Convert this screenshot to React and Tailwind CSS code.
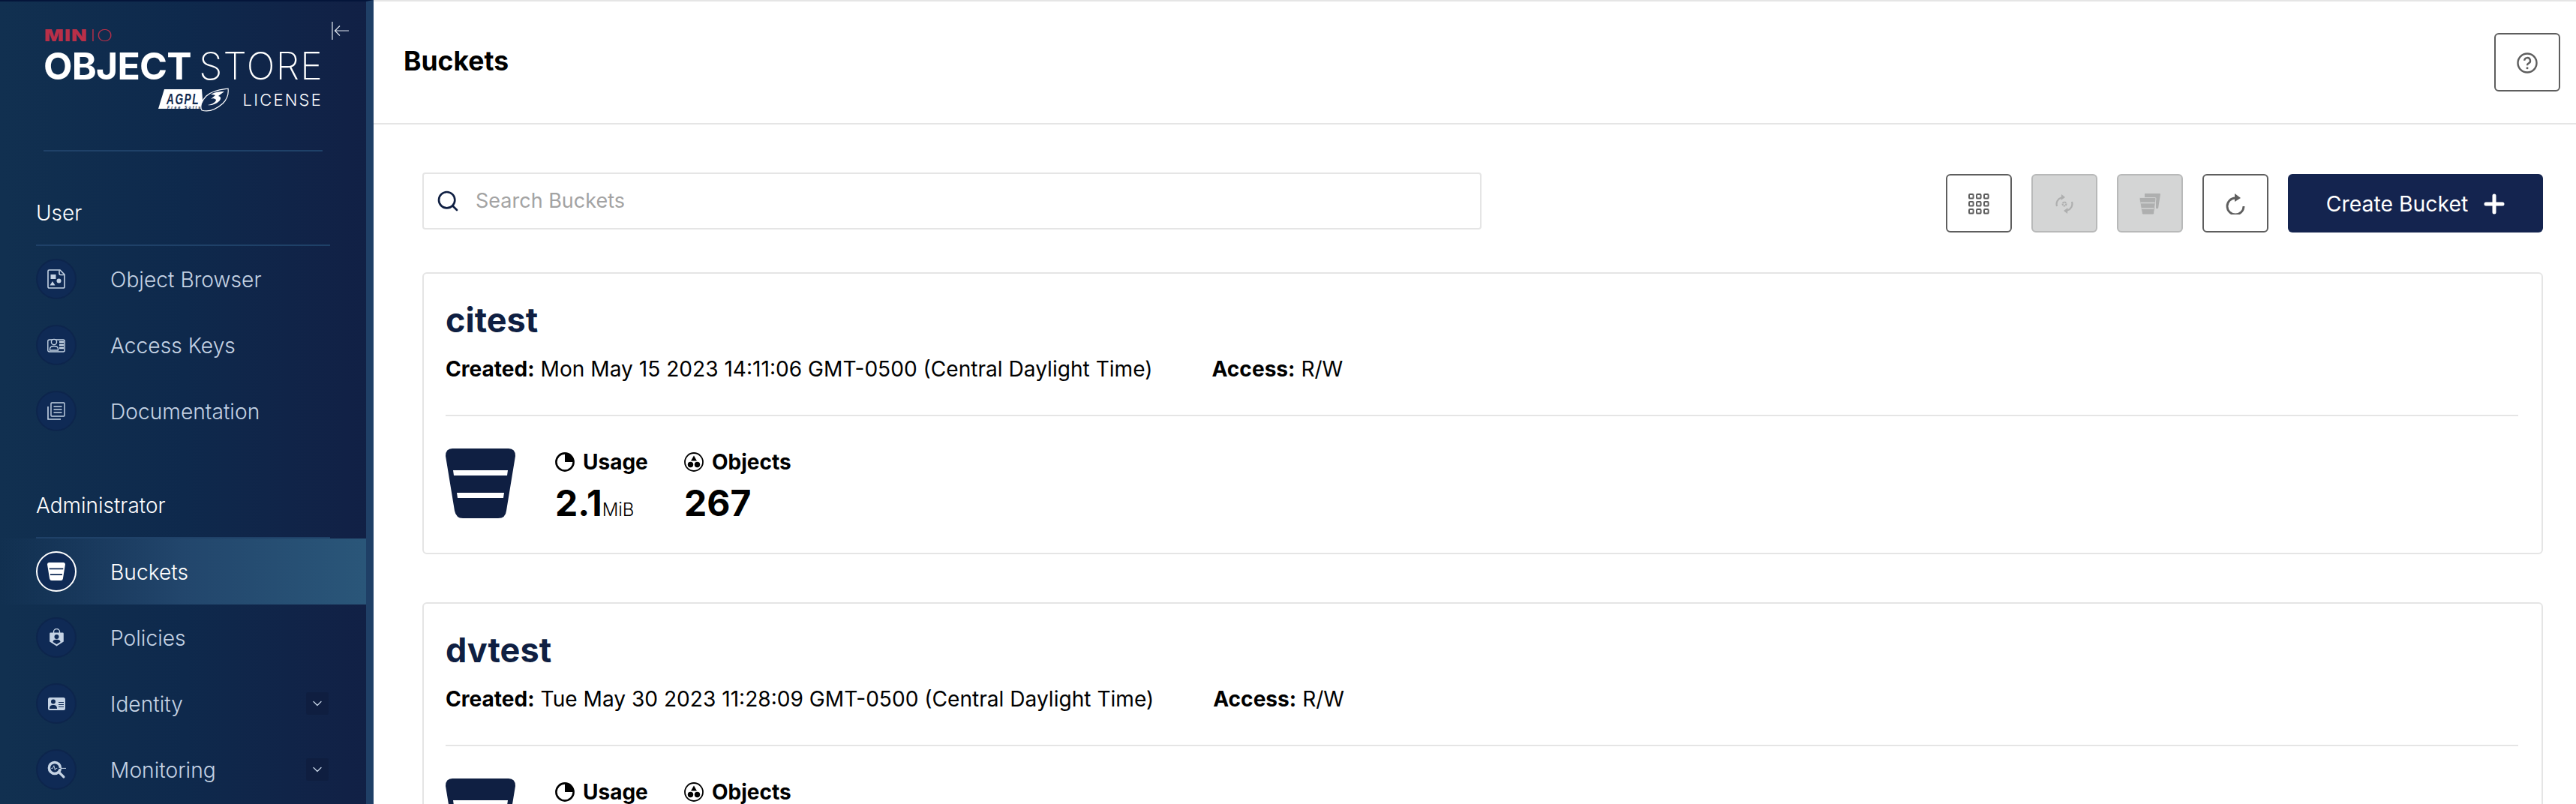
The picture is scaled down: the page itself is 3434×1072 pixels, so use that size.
import { ChevronDown, Search } from 'lucide-react';

const BucketIcon = ({ className, bar = '#fff', fill = 'currentColor' }) => (
  <svg className={className} viewBox="0 0 93 93" fill="none">
    <path d="M9 0H84Q93 0 93 10L81 83Q80 93 70 93H23Q14 93 12 83L0 10Q0 0 9 0Z" fill={fill} />
    <path d="M10 29H83L82 36H11ZM15 59H78L77 66H16Z" fill={bar} />
  </svg>
);

const ObjectBrowserIcon = () => (
  <svg className="w-[24px] h-[26px]" viewBox="0 0 24 26" fill="none">
    <path d="M2.5 1H17L23 7V23.5a1.5 1.5 0 0 1-1.5 1.5h-19A1.5 1.5 0 0 1 1 23.5V2.5A1.5 1.5 0 0 1 2.5 1Z" stroke="currentColor" strokeWidth="1.6" />
    <path d="M16 1.5V5.5a2 2 0 0 0 2 2H22.5" stroke="currentColor" strokeWidth="1.6" />
    <rect x="4.5" y="7" width="7" height="6" fill="currentColor" />
    <circle cx="15.5" cy="15.5" r="3" fill="currentColor" />
    <path d="M3.5 21.5L7 16L10.5 21.5Z" fill="currentColor" />
  </svg>
);

const AccessKeysIcon = () => (
  <svg className="w-[24px] h-[20px]" viewBox="0 0 24 20" fill="none">
    <rect x="0.8" y="3" width="22.4" height="16" rx="2" stroke="currentColor" strokeWidth="1.4" />
    <circle cx="9" cy="6" r="3.6" fill="#0f2a55" stroke="currentColor" strokeWidth="1.4" />
    <path d="M3.5 15.5C3.5 12.5 6 11.5 9 11.5S14.5 12.5 14.5 15.5V17H3.5Z" stroke="currentColor" strokeWidth="1.4" />
    <path d="M16 6h6M16 10h6M16 14h6" stroke="currentColor" strokeWidth="2.4" />
  </svg>
);

const DocumentationIcon = () => (
  <svg className="w-[24px] h-[24px]" viewBox="0 0 24 24" fill="none">
    <rect x="5" y="1" width="18" height="18" rx="1" stroke="currentColor" strokeWidth="1.4" />
    <path d="M8.5 6h11M8.5 10h11M8.5 14h11" stroke="currentColor" strokeWidth="1.6" />
    <path d="M1 6V23H18" stroke="currentColor" strokeWidth="1.6" />
  </svg>
);

const PoliciesIcon = () => (
  <svg className="w-[19px] h-[24px]" viewBox="0 0 19 24">
    <path d="M5.5 6V4.5a4 4 0 0 1 8 0V6" fill="none" stroke="currentColor" strokeWidth="1.4" />
    <path d="M1.5 5.5H17.5A1.3 1.3 0 0 1 18.8 6.8V17.5L9.5 23.5L0.2 17.5V6.8A1.3 1.3 0 0 1 1.5 5.5Z" fill="currentColor" />
    <circle cx="9.5" cy="11" r="3" fill="#0f2a55" />
    <path d="M4.5 18C4.5 15.5 7 14.8 9.5 14.8S14.5 15.5 14.5 18L9.5 21Z" fill="#0f2a55" />
  </svg>
);

const IdentityIcon = () => (
  <svg className="w-[23px] h-[17px]" viewBox="0 0 23 17">
    <rect width="23" height="17" rx="2.5" fill="currentColor" />
    <circle cx="7" cy="5.5" r="3" fill="#0f2a55" />
    <path d="M2 15C2 11 4 10 7 10S12 11 12 15Z" fill="#0f2a55" />
    <path d="M14 6.5h7M14 9.5h7M14 12.5h7" stroke="#0f2a55" strokeWidth="1.2" />
  </svg>
);

const MonitoringIcon = () => (
  <svg className="w-[25px] h-[25px]" viewBox="0 0 24 24" fill="none">
    <circle cx="9.5" cy="9.5" r="7.2" stroke="currentColor" strokeWidth="3.4" />
    <path d="M15 15L21 21" stroke="currentColor" strokeWidth="3.2" strokeLinecap="round" />
    <path d="M5 10H7L8.5 6.5L10 12.5L11 10H13" stroke="currentColor" strokeWidth="0.9" />
    <path d="M13 10H17" stroke="#0f2a55" strokeWidth="1" />
    <path d="M17 10H24" stroke="currentColor" strokeWidth="1" />
  </svg>
);

const GridIcon = () => (
  <svg className="w-[28px] h-[28px]" viewBox="0 0 28 28" fill="none" stroke="currentColor" strokeWidth="2">
    {[1, 11, 21].map((y) =>
      [1, 11, 21].map((x) => <rect key={`${x}-${y}`} x={x} y={y} width="5.6" height="5.6" rx="1.2" />)
    )}
  </svg>
);

const RehydrateIcon = () => (
  <svg className="w-[24px] h-[28px]" viewBox="0 0 24 28" fill="none" stroke="currentColor">
    <path d="M2 17C0.5 12 3 7 8 5.5" strokeWidth="2.2" />
    <path d="M8 1L13 5L7.5 9Z" fill="currentColor" stroke="none" />
    <path d="M22 11C23.5 16 21 21 16 22.5" strokeWidth="2.2" />
    <path d="M16 27L11 23L16.5 19Z" fill="currentColor" stroke="none" />
    <circle cx="12" cy="14" r="2.4" strokeWidth="2.2" strokeDasharray="2 0.6" />
  </svg>
);

const MultiBucketIcon = () => (
  <svg className="w-[28px] h-[28px]" viewBox="0 0 28 28">
    <path d="M7 0H27Q28 0 28 1L25 20H22V6H7Z" fill="currentColor" />
    <path d="M1 5.5H21Q22 5.5 22 7L19.5 26.5Q19.3 28 18 28H5Q3.7 28 3.5 26.5L0 7Q0 5.5 1 5.5Z" fill="currentColor" stroke="#d4d5d5" strokeWidth="0.8" />
    <path d="M1.5 12.5H20.5M3 20H19" stroke="#d4d5d5" strokeWidth="1.4" />
  </svg>
);

const RefreshIcon = () => (
  <svg className="w-[26px] h-[28px]" viewBox="0 0 26 28" fill="none">
    <path d="M13 6A11 11 0 1 0 24 17" stroke="currentColor" strokeWidth="2.8" />
    <path d="M12 0L20 6L12 11Z" fill="currentColor" />
  </svg>
);

const HelpIcon = () => (
  <svg className="w-[28px] h-[28px]" viewBox="0 0 28 28" fill="none" stroke="currentColor">
    <circle cx="14" cy="14" r="12.5" strokeWidth="2.4" />
    <path d="M10.2 10.8A3.9 3.9 0 1 1 15.5 14.6C14.3 15.2 14 15.8 14 17.2" strokeWidth="2.4" />
    <circle cx="14" cy="20.8" r="1.5" fill="currentColor" stroke="none" />
  </svg>
);

const UsageIcon = () => (
  <svg className="w-[26px] h-[26px]" viewBox="0 0 26 26" fill="none">
    <circle cx="13" cy="13" r="11.6" stroke="currentColor" strokeWidth="2.6" />
    <path d="M13 1A12 12 0 0 1 25 13H13Z" fill="currentColor" />
  </svg>
);

const ObjectsIcon = () => (
  <svg className="w-[26px] h-[26px]" viewBox="0 0 26 26" fill="none">
    <circle cx="13" cy="13" r="12" stroke="currentColor" strokeWidth="1.8" />
    <path d="M13 4.5L17 11.5H9Z" fill="currentColor" />
    <circle cx="8.5" cy="16.5" r="3.7" fill="currentColor" />
    <circle cx="17.5" cy="16.5" r="3.7" fill="currentColor" />
  </svg>
);

const AgplLogo = () => (
  <svg className="w-[94px] h-[32px]" viewBox="0 0 94 32">
    <path d="M8 2H58L60 28H0Z" fill="#fff" />
    <text x="11" y="22" fontFamily="'Liberation Sans', sans-serif" fontSize="20" fontStyle="italic" fontWeight="700" fill="#10294f" textLength="44" lengthAdjust="spacingAndGlyphs">AGPL</text>
    <text x="12" y="27.5" fontFamily="'Liberation Sans', sans-serif" fontSize="5" fontStyle="italic" fontWeight="700" fill="#10294f">Free Software</text>
    <path d="M58 30C68 33 78 28 86 21C92 15 94 8 93 1C86 2 72 3 64 11C58 17 55 25 58 30Z" fill="#10294f" stroke="#fff" strokeWidth="1.2" />
    <path d="M70 9C76 5 84 5 88 5L80 11C84 12 84 15 81 18C77 22 70 24 66 23C72 22 77 19 77 16C75 14 72 14 70 15L76 10C74 9 72 9 70 9Z" fill="#fff" />
  </svg>
);

const SideSection = ({ label }) => (
  <div className="mx-[48px] h-[126px] border-b-2 border-[#1f4168] pt-[62px] text-[28px] leading-[40px] font-light text-white">
    {label}
  </div>
);

const SideItem = ({ icon, label, active, expandable }) => (
  <div
    className={`h-[88px] pl-[48px] pr-[50px] flex items-center ${
      active ? 'bg-gradient-to-r from-[#12345400] via-[#22466c] to-[#2a5679] text-white' : 'text-[#c5d3e4]'
    }`}
  >
    <div
      className={`w-[54px] h-[54px] rounded-full flex items-center justify-center shrink-0 bg-[#0f2a55] border-2 ${
        active ? 'border-white text-white' : 'border-[#0d254c] text-[#c5d3e4]'
      }`}
    >
      {icon}
    </div>
    <span className="ml-[45px] pt-[2px] text-[28.2px] leading-[40px] font-light flex-1">{label}</span>
    {expandable && (
      <div className="w-[30px] h-[30px] rounded-[3px] bg-[#0f1e40] flex items-center justify-center">
        <ChevronDown className="w-[20px] h-[20px]" strokeWidth={1.5} />
      </div>
    )}
  </div>
);

const Sidebar = () => (
  <aside className="w-[498px] h-full shrink-0 border-r-[10px] border-[#1f3f66] border-t-2 border-t-[#04153a] bg-gradient-to-r from-[#113050] via-[#0e294c] to-[#112045] relative overflow-hidden">
    <svg className="absolute left-[442px] top-[26px] w-[24px] h-[26px] text-[#dfe6ef]" viewBox="0 0 24 26" fill="none" stroke="currentColor" strokeWidth="1.2">
      <path d="M1 1V25M23 13H5M11 6.5L4.5 13L11 19.5" />
    </svg>
    <div className="mx-[58px] h-[200px] border-b-2 border-[#1f4168] pt-[34px] flex flex-col">
      <div className="h-[22px] flex items-center text-[#b92f48] text-[22px] leading-none tracking-[1px] ml-[1px]">
        <span className="font-black scale-x-[1.22] origin-left w-[61px]">MIN</span>
        <span className="font-extralight scale-x-[1.3] origin-left">IO</span>
      </div>
      <div className="mt-[5px] h-[50px] flex justify-between items-center text-white text-[50px] leading-none">
        <span className="font-bold tracking-[-0.8px]">OBJECT</span>
        <span className="font-extralight tracking-[1.3px] -mr-[1px]">STORE</span>
      </div>
      <div className="mt-[4px] flex items-center justify-end text-white text-[22px] tracking-[2.2px] font-light">
        <AgplLogo />
        <span className="ml-[19px] leading-none">LICENSE</span>
      </div>
    </div>
    <SideSection label="User" />
    <SideItem icon={<ObjectBrowserIcon />} label="Object Browser" />
    <SideItem icon={<AccessKeysIcon />} label="Access Keys" />
    <SideItem icon={<DocumentationIcon />} label="Documentation" />
    <SideSection label="Administrator" />
    <SideItem active icon={<BucketIcon className="w-[24px] h-[24px]" bar="#0f2a55" />} label="Buckets" />
    <SideItem icon={<PoliciesIcon />} label="Policies" />
    <SideItem icon={<IdentityIcon />} label="Identity" expandable />
    <SideItem icon={<MonitoringIcon />} label="Monitoring" expandable />
  </aside>
);

const ToolButton = ({ children, disabled }) => (
  <button
    className={`w-[88px] h-[78px] pt-[1px] rounded-[6px] border-2 flex items-center justify-center ${
      disabled ? 'bg-[#d4d5d5] border-[#b8b9b9] text-[#aeafaf]' : 'bg-white border-[#5e5e5e] text-[#5e5e5e]'
    }`}
  >
    {children}
  </button>
);

const BucketCard = ({ name, created, usage, unit, objects, access = 'R/W' }) => (
  <div className="h-[376px] shrink-0 border-2 border-[#e5e5e5] rounded-[6px] pl-[29px] pr-[31px] pt-[38px] bg-white">
    <div className="text-[45px] leading-[48px] font-bold text-[#0f1f42]">{name}</div>
    <div className="mt-[21px] flex text-[28.1px] leading-[40px] text-black">
      <span><b className="font-bold">Created:</b> {created}</span>
      <span className="ml-[79px]"><b className="font-bold">Access:</b> {access}</span>
    </div>
    <div className="mt-[41px] border-t-2 border-[#e5e5e5]" />
    <div className="mt-[43px] flex">
      <BucketIcon className="w-[93px] h-[93px] text-[#0f1f42]" />
      <div className="ml-[53px] w-[172px]">
        <div className="flex items-center h-[36px] text-[28px] font-bold text-black">
          <UsageIcon />
          <span className="ml-[11px]">Usage</span>
        </div>
        <div className="mt-[9px] text-black leading-[56px]">
          <span className="text-[48px] font-bold">{usage}</span>
          <span className="text-[24px] font-light">{unit}</span>
        </div>
      </div>
      <div>
        <div className="flex items-center h-[36px] text-[28px] font-bold text-black">
          <ObjectsIcon />
          <span className="ml-[11px]">Objects</span>
        </div>
        <div className="mt-[9px] text-black leading-[56px]">
          <span className="text-[48px] font-bold">{objects}</span>
        </div>
      </div>
    </div>
  </div>
);

const App = () => (
  <div className="w-[3434px] h-[1072px] flex overflow-hidden bg-white font-['Inter',sans-serif]">
    <Sidebar />
    <main className="flex-1 min-w-0 flex flex-col">
      <header className="h-[166px] shrink-0 border-t-2 border-b-2 border-[#e5e5e5] pl-[40px] pr-[21px] flex items-center justify-between">
        <h1 className="text-[35.5px] font-bold text-black -mt-[2px]">Buckets</h1>
        <ToolButton><HelpIcon /></ToolButton>
      </header>
      <div className="pl-[65px] pr-[44px] pt-[66px] flex flex-col">
        <div className="flex items-start justify-between h-[131px] shrink-0">
          <div className="w-[1412px] h-[76px] -mt-[2px] border-2 border-[#e5e5e5] rounded-[4px] flex items-center pl-[16px]">
            <Search className="w-[32px] h-[32px] text-[#0f1f42]" strokeWidth={2} />
            <span className="ml-[21px] pt-[1px] text-[27px] text-[#a3a3a3]">Search Buckets</span>
          </div>
          <div className="flex gap-[26px]">
            <ToolButton><GridIcon /></ToolButton>
            <ToolButton disabled><RehydrateIcon /></ToolButton>
            <ToolButton disabled><MultiBucketIcon /></ToolButton>
            <ToolButton><RefreshIcon /></ToolButton>
            <button className="w-[340px] h-[78px] pt-[2px] rounded-[6px] bg-[#14244f] text-white text-[28.4px] flex items-center justify-center">
              Create Bucket
              <svg className="ml-[21px] w-[28px] h-[28px]" viewBox="0 0 28 28" fill="none" stroke="currentColor" strokeWidth="5" strokeLinecap="round">
                <path d="M14 3V25M3 14H25" />
              </svg>
            </button>
          </div>
        </div>
        <div className="flex flex-col gap-[64px]">
          <BucketCard name="citest" created="Mon May 15 2023 14:11:06 GMT-0500 (Central Daylight Time)" usage="2.1" unit="MiB" objects="267" />
          <BucketCard name="dvtest" created="Tue May 30 2023 11:28:09 GMT-0500 (Central Daylight Time)" usage="2.1" unit="MiB" objects="267" />
        </div>
      </div>
    </main>
  </div>
);

export default App;
